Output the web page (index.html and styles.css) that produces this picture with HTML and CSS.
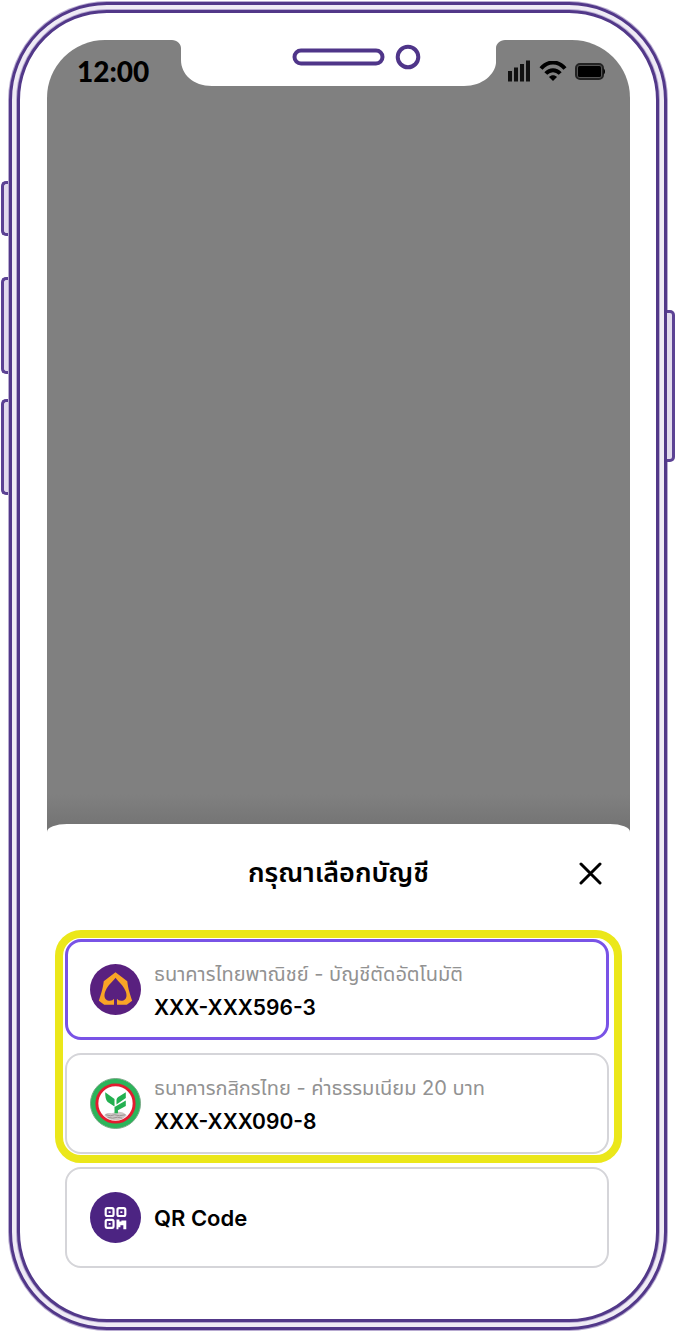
FILE: index.html
```html
<!DOCTYPE html>
<html lang="th">
<head>
<meta charset="utf-8">
<meta name="viewport" content="width=device-width, initial-scale=1">
<title>กรุณาเลือกบัญชี</title>
<link rel="stylesheet" href="styles.css">
</head>
<body>
<div class="rail rail-left">
  <span class="key key-mute"></span>
  <span class="key key-up"></span>
  <span class="key key-down"></span>
</div>
<div class="phone">
  <div class="bezel">
    <div class="backdrop">
      <header class="status">
        <time class="clock">12:00</time>
        <svg class="notch" width="333" height="47" viewBox="0 0 333 47" aria-hidden="true">
          <path d="M0 0C5 0 9 4 9 8V20C9 34 21 46 40 46H292C311 46 323 34 324 23V8C324 4 328 0 333 0V-1H0Z" fill="#fff"/>
          <rect x="122.500" y="10.500" width="88" height="13" rx="6.500" fill="none" stroke="#4f3589" stroke-width="4"/>
          <circle cx="236" cy="17" r="10.300" fill="none" stroke="#4f3589" stroke-width="4"/>
        </svg>
        <div class="signals">
          <svg width="23" height="22" viewBox="0 0 23 22" aria-hidden="true"><path d="M0 11h4v10.500H0zM6 7.500h4v14H6zM12 4h4v17.500h-4zM18 .5h4v21h-4z" fill="#111"/></svg>
          <svg width="28" height="20" viewBox="0 0 28 20" aria-hidden="true"><g fill="none" stroke="#000" stroke-width="4"><path d="M2 7.500C9-.5 19-.5 26 7.500"/><path d="M6.800 12.500C11 8 17 8 21.200 12.500"/></g><path d="M14 20l-4-4c2.200-2.200 5.800-2.200 8 0z"/></svg>
          <svg width="30" height="17" viewBox="0 0 30 17" aria-hidden="true"><rect x="1" y="1" width="27" height="15" rx="4" fill="#555" stroke="#222" stroke-width="2"/><rect x="3" y="3" width="23" height="11" rx="1.500"/><path d="M28.500 5.500c2 1 2 5 0 6z"/></svg>
        </div>
      </header>
    </div>
    <main class="sheet">
      <div class="sheet-head">
        <h1 class="title">กรุณาเลือกบัญชี</h1>
        <button class="close" type="button" aria-label="ปิด">
          <svg width="23" height="23" viewBox="0 0 23 23"><path d="M2 2l19 19M21 2L2 21" stroke="#000" stroke-width="3" stroke-linecap="round"/></svg>
        </button>
      </div>
      <div class="highlight">
        <button class="card card-selected" type="button" aria-pressed="true">
          <svg class="logo" viewBox="0 0 52 52" aria-hidden="true">
            <circle cx="26" cy="26" r="26" fill="#59207f"/>
            <path fill="#f9a526" fill-rule="evenodd" d="M26 8.500L38 17.500C39 26 41 31 43 37.500L37.500 41.500H27.500V35.500Q29 38 33 37.500C38 36.500 38 31 36 27C34 22 29 18 26 14C23 18 18 22 16 27C14 31 14 36.500 19 37.500Q23 38 24.500 35.500V41.500H14.500L9 37.500C11 31 13 26 14 17.500Z"/>
          </svg>
          <span class="info"><span class="bank">ธนาคารไทยพาณิชย์ - บัญชีตัดอัตโนมัติ</span><span class="number">XXX-XXX596-3</span></span>
        </button>
        <button class="card" type="button" aria-pressed="false">
          <svg class="logo" viewBox="0 0 52 52" aria-hidden="true">
            <circle cx="26" cy="26" r="25.500" fill="#2cb45a" stroke="#7aa888" stroke-width="1"/>
            <circle cx="26" cy="26" r="19" fill="#fff" stroke="#e31b2f" stroke-width="3"/>
            <path d="M14.500 38C18 34 21 37 24 35.500C28 33.500 34 34 37.500 38C34 42 30 43 26 43C22 43 18 42 14.500 38Z" fill="#cdc6c5"/>
            <path d="M16 37.500l5 1 4-1 5 1 6-1M18 40l5 1 5-1 5 1" fill="none" stroke="#9b9392" stroke-width="1"/>
            <path d="M15.500 14.500L25 21.500V29L18 24.500C16 22.500 15.500 19 15.500 14.500ZM36.500 14.500V20.500L27 27V23C27 20.500 28 19.500 30 18.500ZM36.500 23V28.500L28.500 33V36H25V29.500Z" fill="#23b050"/>
          </svg>
          <span class="info"><span class="bank">ธนาคารกสิกรไทย - ค่าธรรมเนียม 20 บาท</span><span class="number">XXX-XXX090-8</span></span>
        </button>
      </div>
      <button class="card card-qr" type="button" aria-pressed="false">
        <svg class="logo" viewBox="0 0 52 52" aria-hidden="true">
          <circle cx="26" cy="26" r="26" fill="#4c2482"/>
          <g fill="none" stroke="#fff" stroke-width="2.200"><rect x="16" y="16.500" width="8" height="8" rx="1.500"/><rect x="28" y="16.500" width="8" height="8" rx="1.500"/><rect x="16" y="28.500" width="8" height="8" rx="1.500"/></g>
          <path d="M19 19.500h2v2h-2zM31 19.500h2v2h-2zM19 31.500h2v2h-2zM27 28h3v2h2v-1h5v9h-3v-4h-3v2h-2v2h-2z" fill="#fff"/>
        </svg>
        <span class="label">QR Code</span>
      </button>
    </main>
  </div>
</div>
<div class="rail rail-right">
  <span class="key key-power"></span>
</div>
</body>
</html>
```

FILE: styles.css
```css
* { box-sizing: border-box; }

body {
  display: flex;
  min-height: 100vh;
  margin: 0;
  padding: 2px 2px 4px 1px;
  background: #fff;
  color: #000;
  font-family: Inter, "Noto Sans Thai", "Noto Sans", sans-serif;
}

.rail {
  display: flex;
  flex: 0 0 8px;
  flex-direction: column;
}
.rail-left { padding-top: 179px; }
.rail-right { padding-top: 308px; }

.key {
  border: 3px solid #5c4294;
  background: #e2dbed;
}
.rail-left .key {
  border-right: 0;
  border-radius: 5px 0 0 5px;
}
.rail-right .key {
  border-left: 0;
  border-radius: 0 5px 5px 0;
}
.key-mute { height: 55px; margin-bottom: 41px; }
.key-up { height: 97px; margin-bottom: 25px; }
.key-down { height: 96px; }
.key-power { height: 152px; }

.phone {
  display: flex;
  flex: 1;
  min-width: 0;
  padding: 5px;
  border: 3px solid #523889;
  border-radius: 98px;
  background: #efebf5;
  box-shadow: 0 0 0 1px #b8abd1;
}

.bezel {
  display: flex;
  flex: 1;
  flex-direction: column;
  min-width: 0;
  padding: 27px 26px 51px 27px;
  border: 3px solid #523889;
  border-radius: 90px;
  background: #fff;
  box-shadow: 0 0 0 1px #b8abd1;
}

.backdrop {
  flex: 1;
  margin-bottom: -20px;
  border-radius: 58px 58px 0 0;
  background: linear-gradient(to top, #757575 20px, #808080 50px);
}

.status {
  display: grid;
  grid-template-columns: 1fr auto 1fr;
}
.clock {
  padding: 14px 0 0 30px;
  font: 900 28px/34px Lato, sans-serif;
}
.notch { display: block; }
.signals {
  display: flex;
  align-items: center;
  justify-content: flex-end;
  gap: 8px;
  padding: 14px 25px 0 0;
}

.sheet {
  padding: 0 8px;
  border-radius: 20px 20px 0 0 / 8px 8px 0 0;
  background: #fff;
}

.sheet-head {
  display: grid;
  grid-template-columns: 1fr auto 1fr;
  align-items: center;
  height: 106px;
  padding-bottom: 8px;
}
.title {
  grid-column: 2;
  margin: 0;
  font-size: 27px;
  font-weight: 600;
  line-height: 40px;
}
.close {
  display: flex;
  justify-self: end;
  margin-right: 20px;
  padding: 0;
  border: 0;
  background: none;
}

.highlight {
  display: flex;
  flex-direction: column;
  gap: 13px;
  padding: 1px 5px 1px 2px;
  border: 8px solid #ebe71a;
  border-radius: 26px;
}

.card {
  display: flex;
  align-items: center;
  gap: 13px;
  width: 100%;
  height: 101px;
  padding: 0 23px;
  border: 2px solid #d5d5d9;
  border-radius: 16px;
  background: #fff;
  color: #000;
  font-family: inherit;
  text-align: left;
}
.card-selected {
  padding: 0 22px;
  border: 3px solid #7953e6;
}
.card-qr {
  width: auto;
  min-width: calc(100% - 23px);
  margin: 4px 13px 0 10px;
}

.logo {
  flex: none;
  width: 51px;
  height: 51px;
}
.info {
  display: flex;
  flex-direction: column;
  padding-top: 2px;
}
.bank {
  color: #929292;
  font-size: 20px;
  line-height: 34px;
}
.number {
  font-size: 21px;
  font-weight: 600;
  line-height: 34px;
}
.label {
  font-size: 22px;
  font-weight: 600;
  line-height: 34px;
}
```
